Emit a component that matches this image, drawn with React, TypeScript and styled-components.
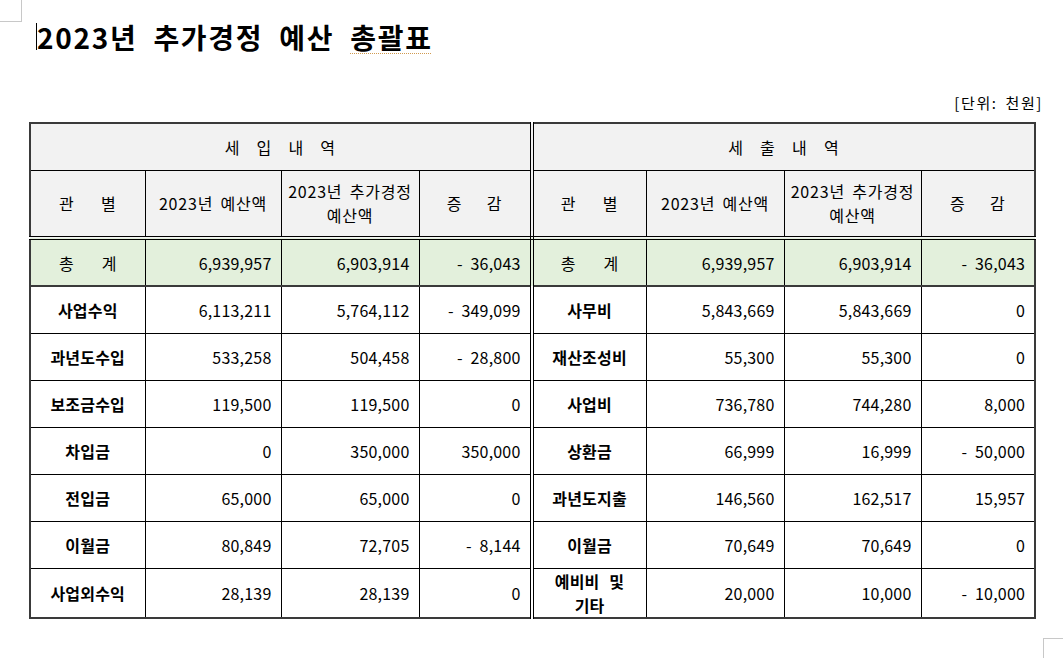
import React from "react";
import styled, { createGlobalStyle } from "styled-components";

const GlobalStyle = createGlobalStyle`
  html, body { margin: 0; padding: 0; background: #ffffff; }
  body {
    font-family: "Noto Sans CJK KR", "Noto Sans", sans-serif;
    color: #000;
  }
`;

const Page = styled.div`
  position: relative;
  width: 1063px;
  height: 658px;
  box-sizing: border-box;
  padding: 20px 0 0 29px;
  overflow: hidden;
`;

const CornerTL = styled.div`
  position: absolute;
  left: 0;
  top: 0;
  width: 21px;
  height: 21px;
  border-right: 1px solid #c8c8c8;
  border-bottom: 1px solid #c8c8c8;
`;

const CornerBR = styled.div`
  position: absolute;
  left: 1043px;
  top: 638px;
  width: 30px;
  height: 30px;
  border-left: 1px solid #c8c8c8;
  border-top: 1px solid #c8c8c8;
`;

const Title = styled.h1`
  position: relative;
  margin: 0 0 0 8px;
  font-size: 28px;
  line-height: 34px;
  font-weight: 700;
  letter-spacing: 1.7px;
  word-spacing: 8px;
  white-space: pre;
  &::before {
    content: "";
    position: absolute;
    left: -1px;
    top: 3px;
    width: 1px;
    height: 27px;
    background: #000;
  }
`;

const Squiggle = styled.span`
  text-decoration: underline dotted #d09a50;
  text-underline-offset: 4px;
  text-decoration-thickness: 1px;
`;

const Unit = styled.div`
  width: 1014px;
  margin-top: 39px;
  text-align: right;
  font-size: 15px;
  line-height: 20px;
  letter-spacing: 1.6px;
  word-spacing: 3px;
`;

const Table = styled.table`
  margin-top: 9px;
  width: 1005px;
  border-collapse: collapse;
  table-layout: fixed;
  border: 2px solid #3a3a3a;
`;

type Tone = "head" | "total" | "body";

const Row = styled.tr<{ $h: number }>`
  height: ${(p) => p.$h}px;
`;

const Cell = styled.td<{
  $tone: Tone;
  $split?: boolean;
  $align?: "center" | "right";
  $bold?: boolean;
  $under?: "double" | "thick";
}>`
  box-sizing: border-box;
  padding: 0 ${(p) => (p.$align === "right" ? "9px" : "2px")} 0 2px;
  border-left: 1px solid #000;
  border-top: 1px solid #000;
  border-right: ${(p) => (p.$split ? "4px double #000" : "1px solid #000")};
  border-bottom: ${(p) =>
    p.$under === "double"
      ? "4px double #000"
      : p.$under === "thick"
      ? "2px solid #3a3a3a"
      : "1px solid #000"};
  background: ${(p) =>
    p.$tone === "head" ? "#f2f2f2" : p.$tone === "total" ? "#e3f0dc" : "#ffffff"};
  text-align: ${(p) => p.$align ?? "center"};
  font-size: 16px;
  letter-spacing: ${(p) => (p.$tone === "head" ? "0.8px" : "0.2px")};
  word-spacing: ${(p) => (p.$align === "right" ? "4px" : p.$bold ? "6px" : "0")};
  font-weight: ${(p) => (p.$bold ? 700 : 400)};
  line-height: 24px;
  vertical-align: middle;
  white-space: pre;
`;

const Spaced = styled.span<{ $gap: number }>`
  word-spacing: ${(p) => p.$gap}px;
`;

type Line = { label: string; a: string; b: string; d: string };

const income: Line[] = [
  { label: "사업수익", a: "6,113,211", b: "5,764,112", d: "- 349,099" },
  { label: "과년도수입", a: "533,258", b: "504,458", d: "- 28,800" },
  { label: "보조금수입", a: "119,500", b: "119,500", d: "0" },
  { label: "차입금", a: "0", b: "350,000", d: "350,000" },
  { label: "전입금", a: "65,000", b: "65,000", d: "0" },
  { label: "이월금", a: "80,849", b: "72,705", d: "- 8,144" },
  { label: "사업외수익", a: "28,139", b: "28,139", d: "0" },
];

const spend: Line[] = [
  { label: "사무비", a: "5,843,669", b: "5,843,669", d: "0" },
  { label: "재산조성비", a: "55,300", b: "55,300", d: "0" },
  { label: "사업비", a: "736,780", b: "744,280", d: "8,000" },
  { label: "상환금", a: "66,999", b: "16,999", d: "- 50,000" },
  { label: "과년도지출", a: "146,560", b: "162,517", d: "15,957" },
  { label: "이월금", a: "70,649", b: "70,649", d: "0" },
  { label: "예비비 및\n기타", a: "20,000", b: "10,000", d: "- 10,000" },
];

const widths = [115, 136, 138, 112.5, 114.5, 138, 137, 114];

const SubHeads: React.FC<{ split?: boolean }> = ({ split }) => (
  <>
    <Cell $tone="head" $under="double">
      <Spaced $gap={22}>관 별</Spaced>
    </Cell>
    <Cell $tone="head" $under="double">
      <Spaced $gap={3}>2023년 예산액</Spaced>
    </Cell>
    <Cell $tone="head" $under="double">
      <Spaced $gap={3}>{"2023년 추가경정\n예산액"}</Spaced>
    </Cell>
    <Cell $tone="head" $under="double" $split={split}>
      <Spaced $gap={20}>증 감</Spaced>
    </Cell>
  </>
);

const TotalCells: React.FC<{ split?: boolean }> = ({ split }) => (
  <>
    <Cell $tone="total" $under="thick">
      <Spaced $gap={24}>총 계</Spaced>
    </Cell>
    <Cell $tone="total" $under="thick" $align="right">6,939,957</Cell>
    <Cell $tone="total" $under="thick" $align="right">6,903,914</Cell>
    <Cell $tone="total" $under="thick" $align="right" $split={split}>
      - 36,043
    </Cell>
  </>
);

const BodyCells: React.FC<{ line: Line; split?: boolean }> = ({ line, split }) => (
  <>
    <Cell $tone="body" $bold>
      {line.label}
    </Cell>
    <Cell $tone="body" $align="right">{line.a}</Cell>
    <Cell $tone="body" $align="right">{line.b}</Cell>
    <Cell $tone="body" $align="right" $split={split}>
      {line.d}
    </Cell>
  </>
);

export default function App() {
  return (
    <>
      <GlobalStyle />
      <Page>
        <CornerTL />
        <CornerBR />
        <Title>
          2023년 추가경정 예산 <Squiggle>총괄표</Squiggle>
        </Title>
        <Unit>[단위: 천원]</Unit>
        <Table>
          <colgroup>
            {widths.map((w, i) => (
              <col key={i} style={{ width: `${w}px` }} />
            ))}
          </colgroup>
          <tbody>
            <Row $h={47}>
              <Cell $tone="head" colSpan={4} $split>
                <Spaced $gap={12}>세 입 내 역</Spaced>
              </Cell>
              <Cell $tone="head" colSpan={4}>
                <Spaced $gap={12}>세 출 내 역</Spaced>
              </Cell>
            </Row>
            <Row $h={68}>
              <SubHeads split />
              <SubHeads />
            </Row>
            <Row $h={48}>
              <TotalCells split />
              <TotalCells />
            </Row>
            {income.map((line, i) => (
              <Row $h={47} key={i}>
                <BodyCells line={line} split />
                <BodyCells line={spend[i]} />
              </Row>
            ))}
          </tbody>
        </Table>
      </Page>
    </>
  );
}
